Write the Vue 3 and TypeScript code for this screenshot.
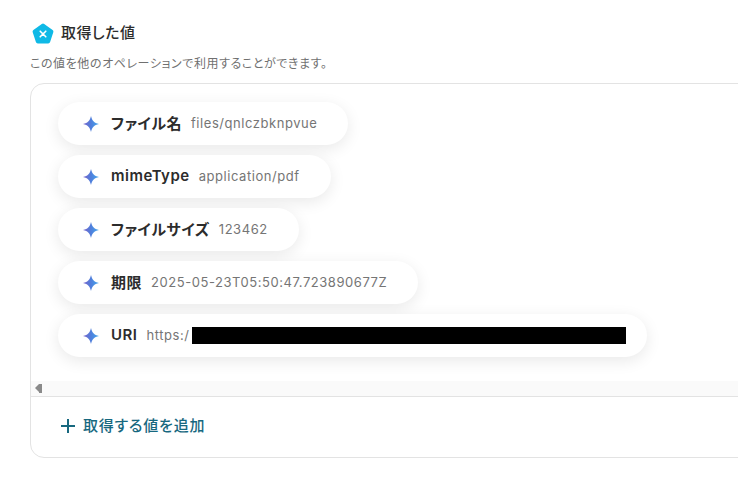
<script setup lang="ts">
interface Item {
  name: string;
  value: string;
  masked?: boolean;
}

const items: Item[] = [
  { name: 'ファイル名', value: 'files/qnlczbknpvue' },
  { name: 'mimeType', value: 'application/pdf' },
  { name: 'ファイルサイズ', value: '123462' },
  { name: '期限', value: '2025-05-23T05:50:47.723890677Z' },
  { name: 'URI', value: 'https:/', masked: true },
];
</script>

<template>
  <div class="page">
    <div class="heading">
      <svg class="logo" width="24" height="24" viewBox="0 0 24 24">
        <path
          d="M10.800 1.900a2 2 0 0 1 2.400 0l8.400 6.100a2 2 0 0 1 .7 2.300l-3.200 9.800a2 2 0 0 1-1.900 1.400H6.800a2 2 0 0 1-1.900-1.400L1.700 10.300a2 2 0 0 1 .7-2.300l8.400-6.100Z"
          fill="#0fb9e6"
        />
        <path d="M9.200 9.200 14.800 14.800M14.800 9.200 9.200 14.800" stroke="#fff" stroke-width="1.600" stroke-linecap="round" />
      </svg>
      <h2 class="title">取得した値</h2>
    </div>
    <p class="description">この値を他のオペレーションで利用することができます。</p>

    <section class="panel">
      <div class="list">
        <div v-for="item in items" :key="item.name" class="pill">
          <svg class="spark" width="18" height="18" viewBox="0 0 18 18">
            <defs>
              <linearGradient id="sparkFill" x1="0" y1="0.500" x2="1" y2="0.500">
                <stop offset="0" stop-color="#7a63c9" />
                <stop offset="0.500" stop-color="#4f7fdc" />
                <stop offset="1" stop-color="#45a8ec" />
              </linearGradient>
            </defs>
            <path d="M9 1C10 5.500 12 8 17 9 12 10 10 12.500 9 17 8 12.500 6 10 1 9 6 8 8 5.500 9 1Z" fill="url(#sparkFill)" />
          </svg>
          <span class="name">{{ item.name }}</span>
          <span class="value">{{ item.value }}</span>
          <span v-if="item.masked" class="mask"></span>
        </div>
      </div>
      <div class="scrollbar">
        <span class="arrow"></span>
      </div>
      <div class="footer">
        <svg class="plus" width="16" height="16" viewBox="0 0 16 16">
          <path d="M8 1v14M1 8h14" stroke="#17687f" stroke-width="2" />
        </svg>
        <span class="add">取得する値を追加</span>
      </div>
    </section>
  </div>
</template>

<style>
html,
body {
  margin: 0;
  background: #fff;
  overflow: hidden;
}
</style>

<style scoped>
.page {
  box-sizing: border-box;
  width: 738px;
  height: 481px;
  padding: 20px 0 0 30px;
  overflow: hidden;
  font-family: Inter, "Noto Sans CJK JP", sans-serif;
  font-feature-settings: "palt";
}

.heading {
  display: flex;
  align-items: center;
  gap: 6px;
  height: 26px;
}

.logo {
  flex: none;
  margin: 2px 0 0 1px;
}

.title {
  margin: 0;
  font-size: 15px;
  font-weight: 500;
  line-height: 24px;
  letter-spacing: 0.500px;
  color: #2c2c2c;
}

.description {
  margin: 9px 0 0;
  font-size: 12px;
  line-height: 18px;
  letter-spacing: 0.580px;
  color: #707070;
}

.panel {
  box-sizing: border-box;
  width: 780px;
  height: 375px;
  margin-top: 10px;
  border: 1px solid #e3e3e3;
  border-radius: 14px;
}

.list {
  display: flex;
  flex-direction: column;
  align-items: flex-start;
  gap: 10px;
  height: 297px;
  padding: 18px 0 0 27px;
  box-sizing: border-box;
  overflow: hidden;
}

.pill {
  display: flex;
  flex: none;
  align-items: center;
  height: 43px;
  padding: 0 31px 0 24px;
  border-radius: 22px;
  background: #fff;
  box-shadow: 0 4px 16px rgba(0, 0, 0, 0.09);
}

.spark {
  flex: none;
  margin-right: 11px;
}

.name {
  margin: -2px 9px 0 0;
  font-size: 15px;
  font-weight: 600;
  letter-spacing: 0.500px;
  color: #2c2c2c;
}

.value {
  margin-top: -2px;
  font-size: 13px;
  letter-spacing: 0.550px;
  color: #757575;
}

.mask {
  width: 434px;
  height: 17px;
  margin-left: 3px;
  background: #000;
}

.pill:last-child {
  padding-right: 21px;
}

.scrollbar {
  display: flex;
  align-items: center;
  height: 15px;
  background: #fafafa;
}

.arrow {
  position: relative;
  width: 3px;
  height: 9px;
  margin-left: 8px;
  background: #8a8a8a;
}

.arrow::before {
  content: "";
  position: absolute;
  top: 0;
  left: -4px;
  border-top: 4.500px solid transparent;
  border-bottom: 4.500px solid transparent;
  border-right: 4px solid #8a8a8a;
}

.footer {
  display: flex;
  align-items: center;
  gap: 7px;
  height: 60px;
  padding: 0 0 2px 29px;
  box-sizing: border-box;
  border-top: 1px solid #e3e3e3;
}

.plus {
  flex: none;
}

.add {
  margin-top: -2px;
  font-size: 15px;
  font-weight: 500;
  letter-spacing: 0.800px;
  color: #17687f;
}
</style>
